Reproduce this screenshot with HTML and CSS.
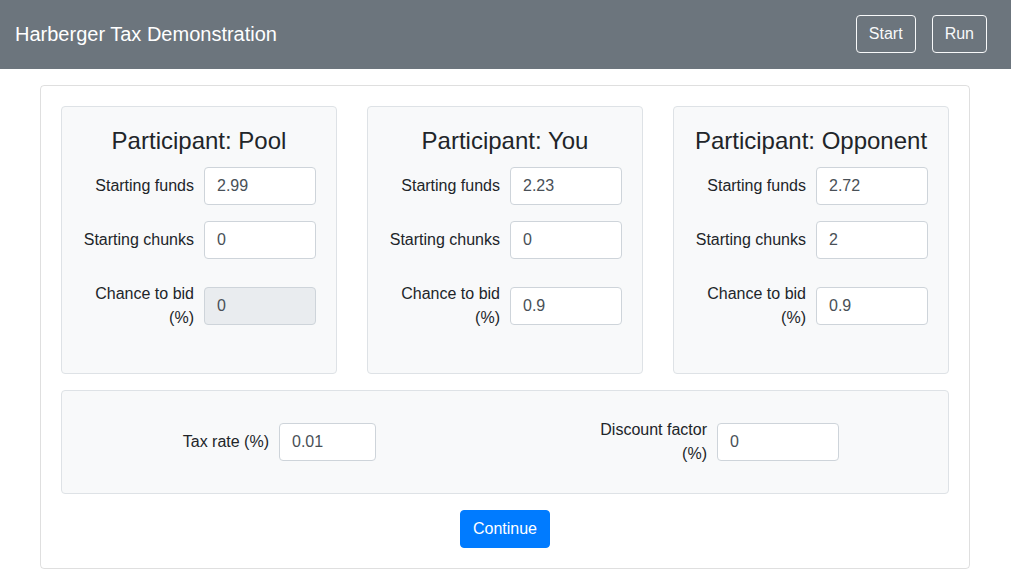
FILE: index.html
```html
<!DOCTYPE html>
<html lang="en">
<head>
<meta charset="utf-8">
<title>Harberger Tax Demonstration</title>
<link rel="stylesheet" href="styles.css">
</head>
<body>
<nav class="navbar">
  <span class="brand">Harberger Tax Demonstration</span>
  <div class="nav-actions">
    <button class="btn btn-outline">Start</button>
    <button class="btn btn-outline">Run</button>
  </div>
</nav>
<main class="container">
  <section class="card">
    <div class="participants">
      <div class="panel">
        <h4 class="panel-title">Participant: Pool</h4>
        <div class="field"><label>Starting funds</label><input type="text" value="2.99"></div>
        <div class="field"><label>Starting chunks</label><input type="text" value="0"></div>
        <div class="field"><label>Chance to bid (%)</label><input type="text" value="0" disabled></div>
      </div>
      <div class="panel">
        <h4 class="panel-title">Participant: You</h4>
        <div class="field"><label>Starting funds</label><input type="text" value="2.23"></div>
        <div class="field"><label>Starting chunks</label><input type="text" value="0"></div>
        <div class="field"><label>Chance to bid (%)</label><input type="text" value="0.9"></div>
      </div>
      <div class="panel">
        <h4 class="panel-title">Participant: Opponent</h4>
        <div class="field"><label>Starting funds</label><input type="text" value="2.72"></div>
        <div class="field"><label>Starting chunks</label><input type="text" value="2"></div>
        <div class="field"><label>Chance to bid (%)</label><input type="text" value="0.9"></div>
      </div>
    </div>
    <div class="panel settings">
      <div class="setting setting-tax">
        <label>Tax rate (%)</label><input type="text" value="0.01">
      </div>
      <div class="setting setting-discount">
        <label class="label-narrow">Discount factor (%)</label><input type="text" value="0">
      </div>
    </div>
    <div class="actions">
      <button class="btn btn-primary">Continue</button>
    </div>
  </section>
</main>
</body>
</html>
```

FILE: styles.css
```css
* {
  box-sizing: border-box;
}

body {
  margin: 0;
  font-family: "Liberation Sans", Arial, sans-serif;
  font-size: 16px;
  line-height: 1.5;
  color: #212529;
  background: #fff;
}

.navbar {
  display: flex;
  align-items: center;
  justify-content: space-between;
  padding: 15px 24px 16px 15px;
  background: #6c757d;
}

.brand {
  font-size: 20px;
  line-height: 1.5;
  color: #fff;
}

.nav-actions {
  display: flex;
  gap: 16px;
}

.btn {
  font-family: inherit;
  font-size: 16px;
  line-height: 1.5;
  padding: 6px 12px;
  border-radius: 4px;
  border: 1px solid transparent;
  cursor: pointer;
}

.btn-outline {
  background: transparent;
  border-color: #f8f9fa;
  color: #f8f9fa;
}

.btn-primary {
  background: #007bff;
  border-color: #007bff;
  color: #fff;
}

.container {
  margin: 16px 41px 0 40px;
}

.card {
  border: 1px solid rgba(0, 0, 0, 0.125);
  border-radius: 4px;
  padding: 20px;
}

.participants {
  display: grid;
  grid-template-columns: repeat(3, 1fr);
  column-gap: 30px;
  margin-bottom: 16px;
}

.panel {
  background: #f8f9fa;
  border: 1px solid #dee2e6;
  border-radius: 4px;
  padding: 20px;
}

.panel-title {
  margin: 0 0 11px;
  font-size: 24px;
  font-weight: 500;
  line-height: 1.2;
  text-align: center;
  color: #212529;
}

.field {
  display: grid;
  grid-template-columns: 1fr 1fr;
  column-gap: 10px;
  align-items: center;
  margin-bottom: 16px;
}

label {
  display: block;
  text-align: right;
  padding: 7px 0;
  line-height: 1.5;
}

input {
  display: block;
  width: 100%;
  height: 38px;
  padding: 6px 12px;
  font-family: inherit;
  font-size: 16px;
  line-height: 1.5;
  color: #495057;
  background: #fff;
  border: 1px solid #ced4da;
  border-radius: 4px;
}

input:disabled {
  background: #e9ecef;
  opacity: 1;
}

.settings {
  display: grid;
  grid-template-columns: 1fr 1fr;
  column-gap: 30px;
}

.setting {
  display: grid;
  column-gap: 10px;
  align-items: center;
}

.setting-tax {
  grid-template-columns: 187px 97px;
}

.setting-discount {
  grid-template-columns: 187px 122px;
}

.label-narrow {
  justify-self: end;
  width: 120px;
}

.actions {
  margin-top: 16px;
  text-align: center;
}
```
